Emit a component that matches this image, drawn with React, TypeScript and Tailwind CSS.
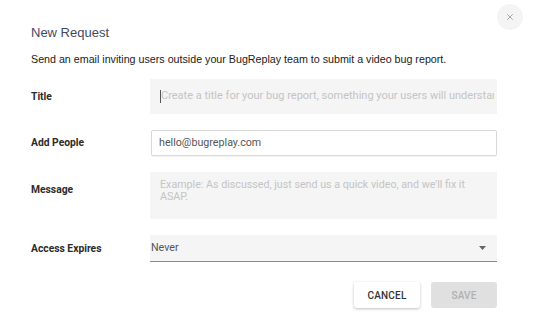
import { X } from "lucide-react";

export default function App() {
  return (
    <div className="relative w-[533px] h-[333px] bg-white overflow-hidden font-['Roboto',sans-serif]">
      <button className="absolute right-[10px] top-[4px] w-[26px] h-[26px] rounded-full bg-[#f4f4f4] flex items-center justify-center text-[#7a7a7a]">
        <X className="w-[10px] h-[10px]" strokeWidth={1.5} />
      </button>

      <div className="pl-[31px] pr-[36px] pt-[25px]">
        <h2 className="font-['Liberation_Sans',sans-serif] text-[13px] leading-[16px] text-[#3f4a63]">
          New Request
        </h2>
        <p className="mt-[11px] font-['Liberation_Sans',sans-serif] text-[10.7px] leading-[14px] text-[#1a1a1a] whitespace-nowrap">
          Send an email inviting users outside your BugReplay team to submit a video bug report.
        </p>

        <div className="mt-[13px] flex flex-col">
          <div className="flex items-center h-[35px]">
            <label className="w-[119px] text-[10.3px] font-bold text-[#2b2b2b]">Title</label>
            <div className="flex-1 h-full bg-[#f5f5f5] flex items-center pl-[10px] pr-[3px] overflow-hidden">
              <span className="w-px h-[13px] bg-[#555]" />
              <span className="text-[11px] text-[#c4c4c4] whitespace-nowrap overflow-hidden">
                Create a title for your bug report, something your users will understand
              </span>
            </div>
          </div>

          <div className="mt-[16px] flex items-center h-[26px]">
            <label className="w-[120px] text-[10.3px] font-bold text-[#2b2b2b]">Add People</label>
            <div className="flex-1 h-full bg-white border border-[#d9d9d9] rounded-[2px] shadow-[0_1px_1px_rgba(0,0,0,0.06)] flex items-center px-[7px]">
              <span className="text-[10.7px] text-[#555]">hello@bugreplay.com</span>
            </div>
          </div>

          <div className="mt-[16px] flex items-start h-[47px]">
            <label className="w-[119px] pt-[10px] text-[10.3px] font-bold text-[#2b2b2b]">Message</label>
            <div className="flex-1 h-full bg-[#f5f5f5] pl-[10px] pr-[30px] pt-[7px]">
              <p className="text-[10.7px] leading-[12px] text-[#c4c4c4]">
                Example: As discussed, just send us a quick video, and we'll fix it ASAP.
              </p>
            </div>
          </div>

          <div className="mt-[16px] flex items-center h-[27px]">
            <label className="w-[119px] text-[10.3px] font-bold text-[#2b2b2b]">Access Expires</label>
            <div className="flex-1 h-full bg-[#f5f5f5] border-b border-[#8c8c8c] flex items-center justify-between pl-[1px] pr-[11px]">
              <span className="text-[10.7px] text-[#555]">Never</span>
              <svg width="7" height="4" viewBox="0 0 7 4">
                <path d="M0 0h7L3.5 4z" fill="#666" />
              </svg>
            </div>
          </div>

          <div className="mt-[20px] flex justify-end gap-[11px]">
            <button className="w-[66px] h-[26px] bg-white rounded-[3px] shadow-[0_1px_3px_rgba(0,0,0,0.25)] text-[10px] font-medium text-[#333] tracking-[0.2px]">
              CANCEL
            </button>
            <button className="w-[66px] h-[26px] bg-[#e0e0e0] rounded-[3px] text-[10px] font-medium text-[#b0b0b0] tracking-[0.2px]">
              SAVE
            </button>
          </div>
        </div>
      </div>
    </div>
  );
}
